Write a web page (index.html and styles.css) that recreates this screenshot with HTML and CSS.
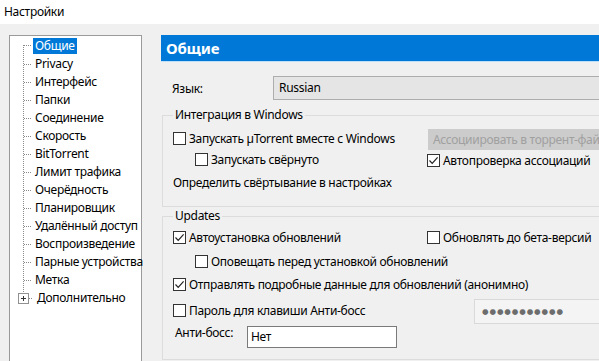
FILE: index.html
```html
<!DOCTYPE html>
<html lang="ru">
<head>
<meta charset="utf-8">
<title>Настройки</title>
<link rel="stylesheet" href="styles.css">
</head>
<body>
<div class="titlebar">Настройки</div>
<div class="main">
  <ul class="tree">
    <li class="first"><span class="label selected">Общие</span></li>
    <li><span class="label">Privacy</span></li>
    <li><span class="label">Интерфейс</span></li>
    <li><span class="label">Папки</span></li>
    <li><span class="label">Соединение</span></li>
    <li><span class="label">Скорость</span></li>
    <li><span class="label">BitTorrent</span></li>
    <li><span class="label">Лимит трафика</span></li>
    <li><span class="label">Очерёдность</span></li>
    <li><span class="label">Планировщик</span></li>
    <li><span class="label">Удалённый доступ</span></li>
    <li><span class="label">Воспроизведение</span></li>
    <li><span class="label">Парные устройства</span></li>
    <li><span class="label">Метка</span></li>
    <li class="last"><span class="expander"><svg width="9" height="9" viewBox="0 0 9 9"><path d="M2 4.5h5M4.5 2v5" stroke="#333" stroke-width="1" shape-rendering="crispEdges"/></svg></span><span class="label">Дополнительно</span></li>
  </ul>
  <div class="panel">
    <div class="panel-header">Общие</div>
    <div class="lang-row">
      <span class="lang-label">Язык:</span>
      <div class="combo">Russian</div>
    </div>
    <fieldset class="group group-win">
      <legend>Интеграция в Windows</legend>
      <div class="row r-a">
        <div class="col1"><span class="check"><span class="box"></span>Запускать µTorrent вместе с Windows</span></div>
        <div class="col2"><div class="btn-disabled">Ассоциировать в торрент-файлы</div></div>
      </div>
      <div class="row r-b">
        <div class="col1"><span class="check indent"><span class="box"></span>Запускать свёрнуто</span></div>
        <div class="col2"><span class="check"><span class="box"><svg width="11" height="11" viewBox="0 0 11 11"><path d="M1.5 5.5l2.7 2.8L9.6 2.4" fill="none" stroke="#222" stroke-width="1.2"/></svg></span>Автопроверка ассоциаций</span></div>
      </div>
      <div class="row r-c">
        <div class="col1 plain">Определить свёртывание в настройках</div>
      </div>
    </fieldset>
    <fieldset class="group group-upd">
      <legend>Updates</legend>
      <div class="row u-a">
        <div class="col1"><span class="check"><span class="box"><svg width="11" height="11" viewBox="0 0 11 11"><path d="M1.5 5.5l2.7 2.8L9.6 2.4" fill="none" stroke="#222" stroke-width="1.2"/></svg></span>Автоустановка обновлений</span></div>
        <div class="col2"><span class="check"><span class="box"></span>Обновлять до бета-версий</span></div>
      </div>
      <div class="row u-b">
        <div class="col1"><span class="check indent"><span class="box"></span>Оповещать перед установкой обновлений</span></div>
      </div>
      <div class="row u-c">
        <div class="col1"><span class="check"><span class="box"><svg width="11" height="11" viewBox="0 0 11 11"><path d="M1.5 5.5l2.7 2.8L9.6 2.4" fill="none" stroke="#222" stroke-width="1.2"/></svg></span>Отправлять подробные данные для обновлений (анонимно)</span></div>
      </div>
      <div class="row u-d">
        <div class="col1"><span class="check"><span class="box"></span>Пароль для клавиши Анти-босс</span></div>
        <div class="col2"><div class="password">●●●●●●●●●●●</div></div>
      </div>
      <div class="row u-e">
        <span class="boss-label">Анти-босс:</span>
        <div class="textbox">Нет</div>
      </div>
    </fieldset>
  </div>
</div>
</body>
</html>
```
FILE: styles.css
```css
html, body {
  margin: 0;
  padding: 0;
  width: 599px;
  height: 361px;
  overflow: hidden;
}
body {
  background: #f0f0f0;
  font-family: "Noto Sans", "Open Sans", sans-serif;
  font-size: 12px;
  letter-spacing: -0.3px;
  color: #000;
}
.titlebar {
  height: 24px;
  line-height: 24px;
  padding-left: 4px;
  background: #fff;
}
.main {
  display: flex;
  align-items: flex-start;
  padding-top: 11px;
}
.tree {
  list-style: none;
  margin: 0 0 0 9px;
  padding: 0;
  width: 131px;
  height: 340px;
  flex-shrink: 0;
  background: #fff;
  border: 1px solid #9a9a9a;
}
.tree li {
  display: flex;
  align-items: center;
  height: 18px;
  padding-left: 23px;
  white-space: nowrap;
  background-image:
    repeating-linear-gradient(to bottom, #8a8a8a 0 1px, transparent 1px 2px),
    repeating-linear-gradient(to right, #8a8a8a 0 1px, transparent 1px 2px);
  background-size: 1px 18px, 8px 1px;
  background-position: 13px 0, 14px 9px;
  background-repeat: no-repeat;
}
.tree li.first {
  padding-top: 1px;
  background-size: 1px 9px, 8px 1px;
  background-position: 13px 9px, 14px 9px;
}
.tree li.last {
  padding-left: 0;
  background-size: 1px 4px, 4px 1px;
  background-position: 13px 0, 19px 9px;
}
.tree .expander {
  display: flex;
  align-items: center;
  justify-content: center;
  width: 9px;
  height: 9px;
  margin-left: 8px;
  margin-right: 6px;
  border: 1px solid #919191;
  background: #fff;
}
.tree .expander svg { display: block; }
.tree .label {
  padding: 0 2px;
  line-height: 16px;
}
.tree .label.selected {
  background: #0078d7;
  color: #fff;
}
.panel {
  margin-left: 19px;
  width: 470px;
  flex-shrink: 0;
}
.panel-header {
  height: 26px;
  line-height: 26px;
  padding-left: 5px;
  background: #0078d7;
  color: #fff;
  font-weight: bold;
  font-size: 15px;
  letter-spacing: -0.2px;
  border-bottom: 1px solid #bfe0f7;
}
.lang-row {
  display: flex;
  align-items: center;
  margin-top: 14px;
  padding-left: 11px;
  height: 24px;
}
.lang-label { width: 101px; }
.combo {
  flex: 1;
  height: 22px;
  line-height: 22px;
  padding-left: 5px;
  background: #e5e5e5;
  border: 1px solid #adadad;
}
.group {
  margin: 7px 0 0 1px;
  padding: 0 0 0 10px;
  border: 1px solid #dcdcdc;
  min-width: 0;
}
.group legend {
  padding: 0 2px;
  line-height: 16px;
}
.group-win { padding-top: 5px; padding-bottom: 13px; }
.group-upd { margin-top: 1px; padding-top: 2px; padding-bottom: 11px; }
.row {
  display: flex;
  align-items: center;
  white-space: nowrap;
}
.col1 { width: 254px; flex-shrink: 0; }
.check {
  display: inline-flex;
  align-items: center;
  gap: 3px;
}
.check.indent { margin-left: 22px; }
.box {
  display: inline-flex;
  align-items: center;
  justify-content: center;
  box-sizing: border-box;
  width: 13px;
  height: 13px;
  border: 1px solid #333;
  background: #fff;
}
.box svg { display: block; }
.r-a { height: 22px; }
.r-b { height: 21px; }
.r-c { height: 22px; }
.btn-disabled {
  width: 190px;
  height: 21px;
  line-height: 21px;
  margin-left: 1px;
  padding-left: 5px;
  background: #cccccc;
  color: #a0a0a0;
}
.u-a { height: 24px; }
.u-b { height: 24px; }
.u-c { height: 22px; }
.u-d { height: 30px; }
.u-e { height: 22px; align-items: flex-start; }
.password {
  margin-left: 47px;
  width: 140px;
  height: 23px;
  line-height: 23px;
  padding-left: 7px;
  background: #f4f4f4;
  border: 1px solid #d9d9d9;
  color: #6d6d6d;
  font-family: "DejaVu Sans", sans-serif;
  font-size: 7.5px;
  letter-spacing: 0.9px;
}
.boss-label {
  width: 72px;
  padding-left: 2px;
  line-height: 14px;
}
.textbox {
  box-sizing: border-box;
  width: 150px;
  height: 22px;
  line-height: 20px;
  padding-left: 3px;
  background: #fff;
  border: 1px solid #7a7a7a;
}
```
